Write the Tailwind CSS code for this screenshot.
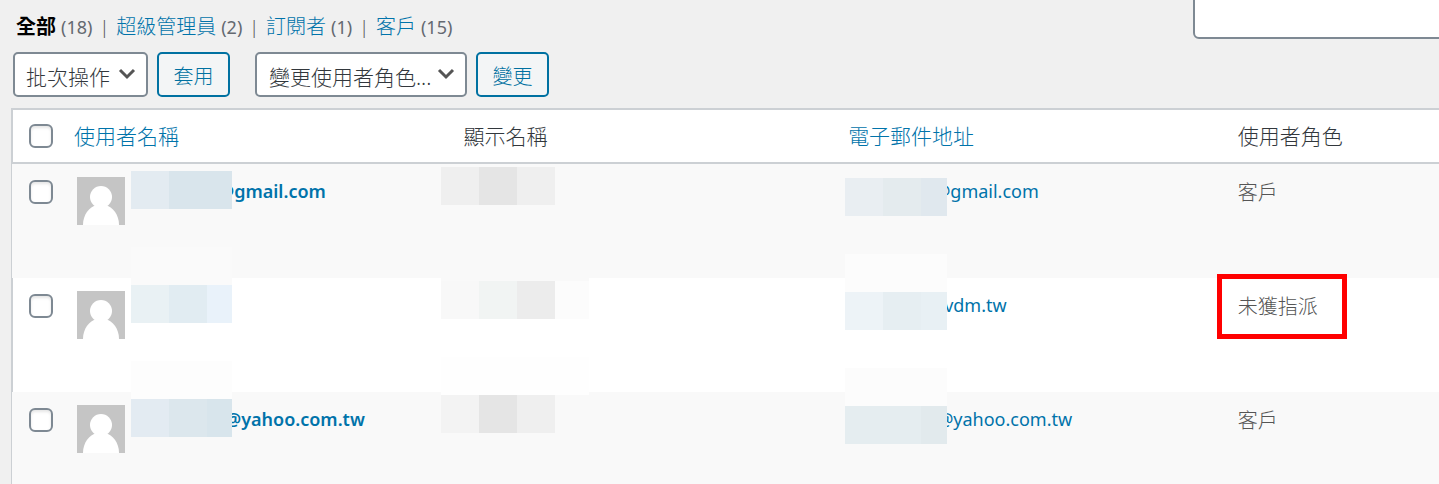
<!DOCTYPE html>
<html lang="zh-Hant">
<head>
<meta charset="utf-8">
<title>使用者</title>
<script src="https://cdn.jsdelivr.net/npm/@tailwindcss/browser@4"></script>
</head>
<body class="min-h-screen overflow-hidden bg-[#f0f0f0] font-['Noto_Sans','Noto_Sans_CJK_TC',sans-serif] text-[20px] leading-7 text-[#555]">
<header class="flex items-start justify-between">
  <div class="pt-[13px] pl-[13px]">
    <nav class="flex items-center pl-[3px] font-light" aria-label="使用者篩選">
      <a href="#" class="mr-[5px] font-semibold text-black">全部</a><span class="text-[18px] font-normal text-[#646970]">(18)</span><span class="mx-[7px] text-[18px]">|</span>
      <a href="#" class="mr-[5px] text-[#0073aa]">超級管理員</a><span class="text-[18px] font-normal text-[#646970]">(2)</span><span class="mx-[7px] text-[18px]">|</span>
      <a href="#" class="mr-[5px] text-[#0073aa]">訂閱者</a><span class="text-[18px] font-normal text-[#646970]">(1)</span><span class="mx-[7px] text-[18px]">|</span>
      <a href="#" class="mr-[5px] text-[#0073aa]">客戶</a><span class="text-[18px] font-normal text-[#646970]">(15)</span>
    </nav>
    <div class="mt-[11px] flex gap-[9px] pb-[11px] font-light">
      <div class="relative">
        <select aria-label="批次操作" class="h-[45px] w-[135px] appearance-none rounded-[5px] border-2 border-[#7e8993] bg-white pt-1 pl-[11px] text-[21px] text-[#32373c]"><option>批次操作</option></select>
        <svg class="pointer-events-none absolute top-[15px] right-[12px]" width="18" height="14" viewBox="0 0 18 14" fill="none" stroke="#555" stroke-width="3"><path d="M2 3l7 7 7-7"/></svg>
      </div>
      <button class="h-[45px] w-[73px] rounded-[5px] border-2 border-[#0071a1] bg-[#f3f5f6] pt-1 text-[#0071a1]">套用</button>
      <div class="relative ml-4">
        <select aria-label="變更使用者角色" class="h-[45px] w-[212px] appearance-none rounded-[5px] border-2 border-[#7e8993] bg-white pt-1 pl-[12px] text-[21px] text-[#32373c]"><option>變更使用者角色...</option></select>
        <svg class="pointer-events-none absolute top-[15px] right-[12px]" width="18" height="14" viewBox="0 0 18 14" fill="none" stroke="#555" stroke-width="3"><path d="M2 3l7 7 7-7"/></svg>
      </div>
      <button class="h-[45px] w-[73px] rounded-[5px] border-2 border-[#0071a1] bg-[#f3f5f6] pt-1 text-[#0071a1]">變更</button>
    </div>
  </div>
  <input type="search" aria-label="搜尋使用者" class="-mt-[6px] -mr-[6px] h-[45px] w-[252px] rounded-[6px] border-2 border-[#7e8993] bg-white px-3">
</header>
<main class="ml-[11px] border-l border-[#ccd0d4]">
<table class="w-full table-fixed border-separate border-spacing-0 text-left">
  <colgroup><col class="w-[52px]"><col class="w-[27.3%]"><col class="w-[26.95%]"><col class="w-[27.3%]"><col></colgroup>
  <thead>
    <tr class="h-14 bg-white text-[21px] text-[#32373c] *:border-y-2 *:border-[#ccd0d4] *:p-0 *:pl-[10px] *:font-light">
      <th class="border-l"><input type="checkbox" aria-label="全選" class="ml-[6px] block size-6 appearance-none rounded-[6px] border-2 border-[#7e8993] bg-white shadow-[inset_0_2px_3px_rgba(0,0,0,0.1)]"></th>
      <th><a href="#" class="text-[#0073aa]">使用者名稱</a></th>
      <th>顯示名稱</th>
      <th><a href="#" class="text-[#0073aa]">電子郵件地址</a></th>
      <th>使用者角色</th>
    </tr>
  </thead>
  <tbody>
    <tr class="h-[114px] bg-[#f9f9f9] align-top">
      <td class="pt-4 pl-[17px]"><input type="checkbox" aria-label="選取使用者 1" class="block size-6 appearance-none rounded-[6px] border-2 border-[#7e8993] bg-white shadow-[inset_0_2px_3px_rgba(0,0,0,0.1)]"></td>
      <td class="relative pt-[13px] pl-[13px]">
        <div class="flex">
          <svg class="size-12" viewBox="0 0 48 48"><path fill="#c5c5c5" d="M0 0h48v48H0z"/><circle cx="24" cy="20" r="11" fill="#fff"/><path fill="#fff" d="M6 48C6 38 12 30 19 28.500h10C36 30 42 38 42 48z"/></svg>
          <a href="#" class="ml-[93px] text-[18px] font-semibold text-[#0073aa]">@gmail.com</a>
        </div>
        <div class="absolute top-[7px] left-[67px] flex h-[38px]"><i class="w-[38px] bg-[#e3ebf1]"></i><i class="w-[63px] bg-[#d9e5ec]"></i></div>
      </td>
      <td class="relative"><div class="absolute top-[3px] -left-[13px] flex h-[38px]"><i class="w-[38px] bg-[#efefef]"></i><i class="w-[38px] bg-[#e5e5e5]"></i><i class="w-[38px] bg-[#efefef]"></i></div></td>
      <td class="relative pt-[13px] pl-[96px]">
        <a href="#" class="text-[18px] text-[#0073aa]">@gmail.com</a>
        <div class="absolute top-[14px] left-[7px] flex h-[38px]"><i class="w-[38px] bg-[#e9eef2]"></i><i class="w-[38px] bg-[#e4ebee]"></i><i class="w-[26px] bg-[#e0e8ee]"></i></div>
      </td>
      <td class="pt-[15px] pl-[10px] font-light">客戶</td>
    </tr>
    <tr class="h-[114px] bg-white align-top">
      <td class="border-l border-[#ccd0d4] pt-4 pl-[16px]"><input type="checkbox" aria-label="選取使用者 2" class="block size-6 appearance-none rounded-[6px] border-2 border-[#7e8993] bg-white shadow-[inset_0_2px_3px_rgba(0,0,0,0.1)]"></td>
      <td class="relative pt-[13px] pl-[13px]">
        <svg class="size-12" viewBox="0 0 48 48"><path fill="#c5c5c5" d="M0 0h48v48H0z"/><circle cx="24" cy="20" r="11" fill="#fff"/><path fill="#fff" d="M6 48C6 38 12 30 19 28.500h10C36 30 42 38 42 48z"/></svg>
        <div class="absolute -top-[31px] left-[67px] h-[38px] w-[101px] bg-[#fafafa]"></div>
        <div class="absolute top-[7px] left-[67px] flex h-[38px]"><i class="w-[38px] bg-[#e9f1f4]"></i><i class="w-[38px] bg-[#e1ecf2]"></i><i class="w-[25px] bg-[#e9f2fa]"></i></div>
      </td>
      <td class="relative">
        <div class="absolute top-0 -left-[13px] h-[3px] w-[148px] bg-[#f9f9f9]"></div>
        <div class="absolute top-[3px] -left-[13px] flex h-[38px]"><i class="w-[38px] bg-[#f8f8f8]"></i><i class="w-[38px] bg-[#f1f4f3]"></i><i class="w-[38px] bg-[#ececec]"></i><i class="w-[34px] bg-[#fcfcfc]"></i></div>
      </td>
      <td class="relative pt-[13px] pl-[106px]">
        <a href="#" class="text-[18px] text-[#0073aa]">vdm.tw</a>
        <div class="absolute -top-[24px] left-[7px] h-[38px] w-[102px] bg-[#fcfcfc]"></div>
        <div class="absolute top-[14px] left-[7px] flex h-[38px]"><i class="w-[38px] bg-[#edf3f7]"></i><i class="w-[38px] bg-[#e6eef2]"></i><i class="w-[26px] bg-[#e8f0f4]"></i></div>
      </td>
      <td class="relative pt-[15px] pl-[10px] font-light">未獲指派<div class="absolute -top-1 -left-[11px] h-[65px] w-[130px] border-5 border-[#ff0000]"></div></td>
    </tr>
    <tr class="h-[114px] bg-[#f9f9f9] align-top">
      <td class="pt-4 pl-[17px]"><input type="checkbox" aria-label="選取使用者 3" class="block size-6 appearance-none rounded-[6px] border-2 border-[#7e8993] bg-white shadow-[inset_0_2px_3px_rgba(0,0,0,0.1)]"></td>
      <td class="relative pt-[13px] pl-[13px]">
        <div class="flex">
          <svg class="size-12" viewBox="0 0 48 48"><path fill="#c5c5c5" d="M0 0h48v48H0z"/><circle cx="24" cy="20" r="11" fill="#fff"/><path fill="#fff" d="M6 48C6 38 12 30 19 28.500h10C36 30 42 38 42 48z"/></svg>
          <a href="#" class="ml-[100px] text-[18px] font-semibold text-[#0073aa]">@yahoo.com.tw</a>
        </div>
        <div class="absolute -top-[31px] left-[67px] h-[38px] w-[101px] bg-[#fdfdfd]"></div>
        <div class="absolute top-[7px] left-[67px] flex h-[38px]"><i class="w-[38px] bg-[#e3ebf2]"></i><i class="w-[38px] bg-[#dce7ed]"></i><i class="w-[25px] bg-[#d8e5ec]"></i></div>
      </td>
      <td class="relative">
        <div class="absolute -top-[35px] -left-[13px] h-[38px] w-[148px] bg-[#fefefe]"></div>
        <div class="absolute top-[3px] -left-[13px] flex h-[38px]"><i class="w-[38px] bg-[#f3f3f3]"></i><i class="w-[38px] bg-[#e5e5e5]"></i><i class="w-[38px] bg-[#efefef]"></i></div>
      </td>
      <td class="relative pt-[13px] pl-[99px]">
        <a href="#" class="text-[18px] text-[#0073aa]">@yahoo.com.tw</a>
        <div class="absolute -top-[24px] left-[7px] h-[38px] w-[102px] bg-[#fcfcfc]"></div>
        <div class="absolute top-[14px] left-[7px] flex h-[38px]"><i class="w-[76px] bg-[#e5edf0]"></i><i class="w-[26px] bg-[#e2eaed]"></i></div>
      </td>
      <td class="pt-[15px] pl-[10px] font-light">客戶</td>
    </tr>
  </tbody>
</table>
</main>
</body>
</html>
